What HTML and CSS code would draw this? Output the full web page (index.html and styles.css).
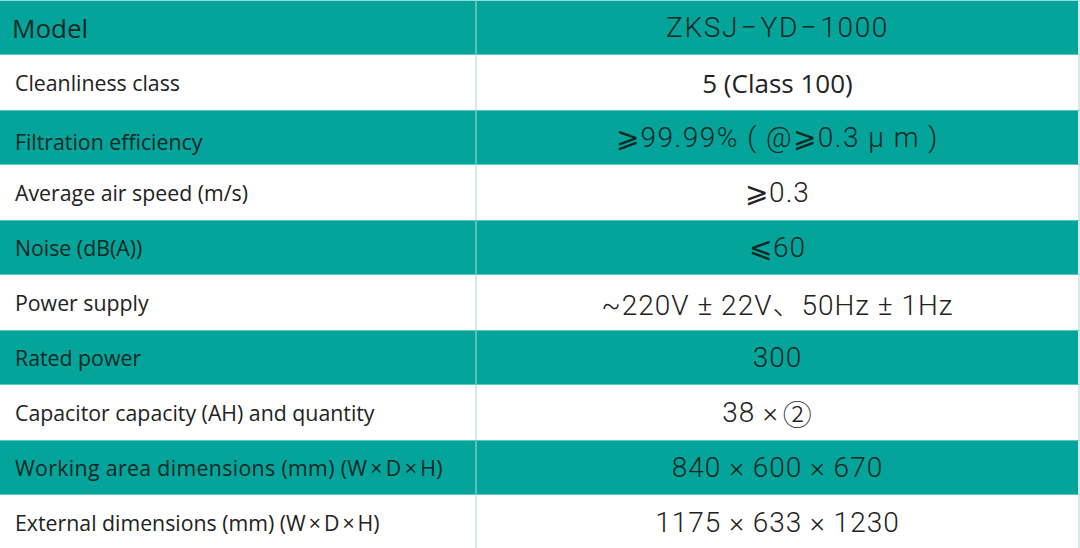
FILE: index.html
```html
<!DOCTYPE html>
<html>
<head>
<meta charset="utf-8">
<link rel="stylesheet" href="styles.css">
</head>
<body>
<div class="spec">
  <div class="row teal head">
    <div class="label model">Model</div>
    <div class="value model-val">ZKSJ<span class="dash">−</span>YD<span class="dash">−</span>1000</div>
  </div>
  <div class="row white">
    <div class="label">Cleanliness class</div>
    <div class="value seg">5 (Class 100)</div>
  </div>
  <div class="row teal">
    <div class="label low">Filtration efficiency</div>
    <div class="value wide">⩾99.99% ( @⩾0.3 μ m )</div>
  </div>
  <div class="row white">
    <div class="label">Average air speed (m/s)</div>
    <div class="value">⩾0.3</div>
  </div>
  <div class="row teal">
    <div class="label">Noise (dB(A))</div>
    <div class="value">⩽60</div>
  </div>
  <div class="row white">
    <div class="label">Power supply</div>
    <div class="value">~220V ± 22V、50Hz ± 1Hz</div>
  </div>
  <div class="row teal">
    <div class="label">Rated power</div>
    <div class="value">300</div>
  </div>
  <div class="row white">
    <div class="label">Capacitor capacity (AH) and quantity</div>
    <div class="value shift">38 ×<span class="circ">②</span></div>
  </div>
  <div class="row teal">
    <div class="label wider">Working area dimensions (mm) (W<span class="x">×</span>D<span class="x">×</span>H)</div>
    <div class="value">840 × 600 × 670</div>
  </div>
  <div class="row white">
    <div class="label">External dimensions (mm) (W<span class="x">×</span>D<span class="x">×</span>H)</div>
    <div class="value">1175 × 633 × 1230</div>
  </div>
</div>
</body>
</html>
```

FILE: styles.css
```css
html, body {
  margin: 0;
  padding: 0;
  background: #ffffff;
  overflow: hidden;
}

.spec {
  width: 1080px;
  display: flex;
  flex-direction: column;
}

.row {
  display: grid;
  grid-template-columns: 477px 601px;
  box-sizing: border-box;
  border-top: 1px solid #5ccac1;
  border-right: 2px solid #d4ebe8;
}

.row.teal {
  height: 54px;
  background: #04a49a;
  color: #0e2826;
}

.row.white {
  height: 56px;
  background: #ffffff;
  color: #222222;
}

.row.head {
  border-top-color: #8fe0da;
}

.label {
  display: flex;
  align-items: center;
  padding-left: 15px;
  font-family: "Open Sans", "Noto Sans", sans-serif;
  font-size: 21.3px;
  letter-spacing: 0;
  white-space: pre;
  border-right: 2px solid #d8e9e7;
}

.row.teal .label {
  border-right-color: #55c3ba;
}

.label .x {
  margin: 0 3px;
}

.label.wider {
  letter-spacing: 0.35px;
}

.label.model {
  font-size: 26px;
  padding-left: 12px;
}

.label.low {
  padding-top: 8px;
}

.value {
  display: flex;
  align-items: center;
  justify-content: center;
  font-family: "Roboto", "Liberation Sans", Arial, "Noto Sans CJK SC", sans-serif;
  font-weight: 300;
  font-size: 28px;
  letter-spacing: 1px;
}

.value.wide {
  letter-spacing: 1.5px;
}

.value.model-val {
  letter-spacing: 1.6px;
}

.value.shift {
  padding-right: 20px;
}

.circ {
  font-size: 29px;
  margin-left: 4px;
}

.dash {
  margin: 0 2px;
}

.value.seg {
  font-family: "Open Sans", "Noto Sans", sans-serif;
  font-weight: 400;
  font-size: 26px;
  letter-spacing: 0;
}
```
